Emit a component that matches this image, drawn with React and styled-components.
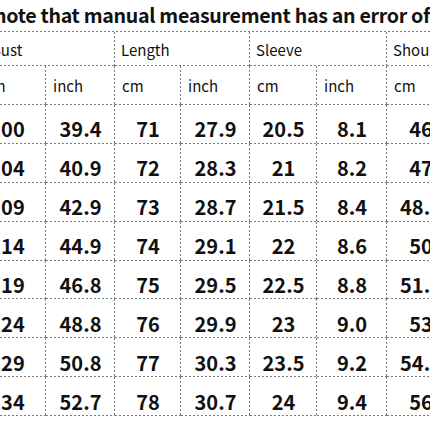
import React from "react";
import styled, { createGlobalStyle } from "styled-components";

const Global = createGlobalStyle`
  html, body { margin: 0; padding: 0; background: #fff; }
  body { width: 430px; height: 430px; overflow: hidden; font-family: "Noto Sans CJK KR", "Noto Sans", sans-serif; color: #111; }
`;

const LINE = "#7c7c7c";

const Sheet = styled.div`
  display: grid;
  grid-template-columns: 78px 69px 66px 69px 67px 70px 68px;
  grid-template-rows: 32px 34px 39px repeat(8, 38.9px);
  margin-left: -32px;
  width: 487px;
`;

const Cell = styled.div`
  box-sizing: border-box;
  grid-column: span ${(p) => p.$span || 1};
  display: flex;
  align-items: center;
  justify-content: flex-start;
  white-space: nowrap;
  background:
    repeating-linear-gradient(90deg, ${LINE} 0 2px, transparent 2px 4px) left bottom / 100% 1px no-repeat,
    repeating-linear-gradient(180deg, ${LINE} 0 2px, transparent 2px 4px) right top / 1px 100% no-repeat;
`;

const Title = styled(Cell)`
  grid-column: 1 / -1;
  background:
    repeating-linear-gradient(90deg, ${LINE} 0 2px, transparent 2px 4px) left bottom / 100% 1px no-repeat;
  padding-left: 26px;
  padding-bottom: 4px;
  font-size: 19.6px;
  font-weight: 700;
  letter-spacing: -0.3px;
`;

const Head = styled(Cell)`
  padding-left: ${(p) => p.$pad || 6}px;
  font-size: 15px;
  font-weight: 400;
`;

const Unit = styled(Cell)`
  padding-left: ${(p) => p.$pad || 7}px;
  font-size: 15px;
  font-weight: 400;
`;

const Value = styled(Cell)`
  justify-content: center;
  padding-top: 9px;
  font-size: 20px;
  font-weight: 700;
`;

const rows = [
  ["100", "39.4", "71", "27.9", "20.5", "8.1", "46"],
  ["104", "40.9", "72", "28.3", "21", "8.2", "47"],
  ["109", "42.9", "73", "28.7", "21.5", "8.4", "48.5"],
  ["114", "44.9", "74", "29.1", "22", "8.6", "50"],
  ["119", "46.8", "75", "29.5", "22.5", "8.8", "51.5"],
  ["124", "48.8", "76", "29.9", "23", "9.0", "53"],
  ["129", "50.8", "77", "30.3", "23.5", "9.2", "54.5"],
  ["134", "52.7", "78", "30.7", "24", "9.4", "56"],
];

const units = ["cm", "inch", "cm", "inch", "cm", "inch", "cm"];

export default function App() {
  return (
    <>
      <Global />
      <Sheet>
        <Title>note that manual measurement has an error of</Title>
        <Head $span={2} $pad={23}>Bust</Head>
        <Head $span={2}>Length</Head>
        <Head $span={2}>Sleeve</Head>
        <Head>Shoulder</Head>
        {units.map((u, i) => (
          <Unit key={i} $pad={i === 0 ? 16 : undefined}>{u}</Unit>
        ))}
        {rows.map((r, ri) =>
          r.map((v, ci) => <Value key={ri + "-" + ci}>{v}</Value>)
        )}
      </Sheet>
    </>
  );
}
